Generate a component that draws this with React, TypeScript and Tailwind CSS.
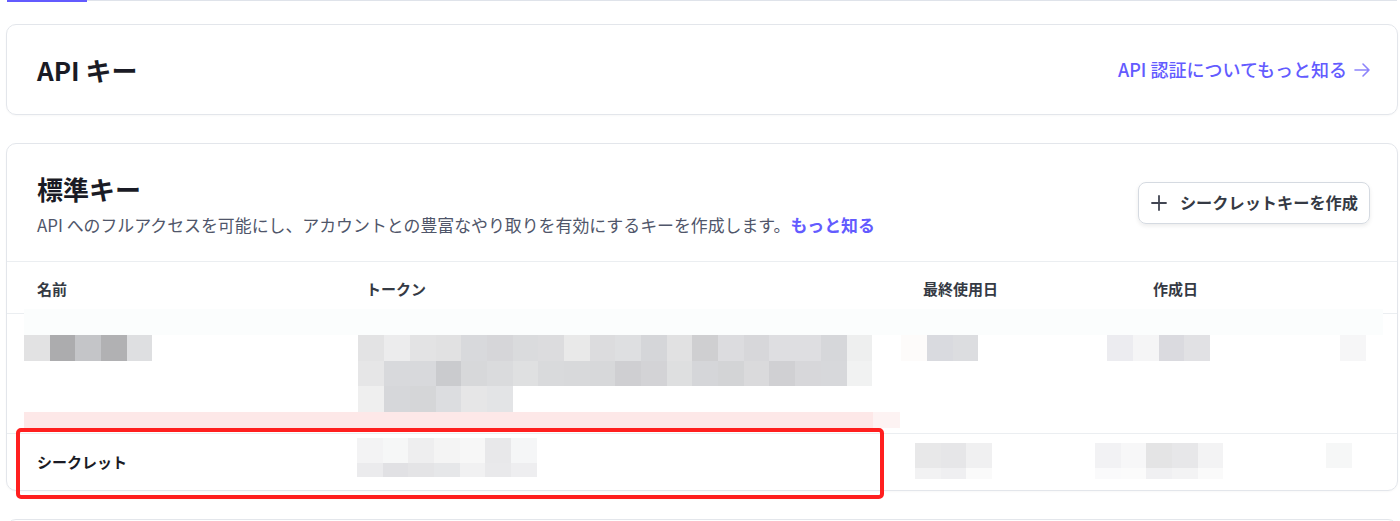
import React from "react";
import { Plus } from "lucide-react";

const tokenRows = [
  [
    "bg-[#e3e3e4]", "bg-[#ececed]", "bg-[#e3e3e4]", "bg-[#e1e1e2]", "bg-[#d8d9dc]",
    "bg-[#d6d6d9]", "bg-[#dadbdd]", "bg-[#dcdcde]", "bg-[#e9e9e9]", "bg-[#dcdcde]",
    "bg-[#dedfe1]", "bg-[#d5d6d9]", "bg-[#e1e1e2]", "bg-[#cfcfd1]", "bg-[#dcdcdf]",
    "bg-[#d7d7da]", "bg-[#dedee1]", "bg-[#dedee1]", "bg-[#d6d7da]", "bg-[#eeefef]",
  ],
  [
    "bg-[#e6e6e7]", "bg-[#d8d9dc]", "bg-[#d8d9dc]", "bg-[#cacbce]", "bg-[#d7d8da]",
    "bg-[#dadbdd]", "bg-[#dfe0e1]", "bg-[#d9dadc]", "bg-[#d8d9db]", "bg-[#d7d8da]",
    "bg-[#cfcfd2]", "bg-[#d3d3d6]", "bg-[#dedfe0]", "bg-[#d5d6d9]", "bg-[#d3d4d6]",
    "bg-[#dadadc]", "bg-[#d0d0d3]", "bg-[#d7d7da]", "bg-[#d7d8db]", "bg-[#f1f2f2]",
  ],
  ["bg-[#efefef]", "bg-[#d6d7da]", "bg-[#d5d6d8]", "bg-[#dcdde0]", "bg-[#e6e6e7]", "bg-[#e3e4e6]"],
];

// one strip of pixelated blocks
function Blocks({ cells, h = "h-[25.6px]" }: { cells: string[]; h?: string }) {
  return (
    <div className="flex">
      {cells.map((c, i) => (
        <div key={i} className={`w-[25.7px] shrink-0 ${h} ${c}`} />
      ))}
    </div>
  );
}

export default function App() {
  return (
    <div className="relative h-[521px] w-[1400px] overflow-hidden bg-white font-['Noto_Sans_CJK_JP','Noto_Sans',sans-serif] text-[#353a44]">
      {/* tab underline */}
      <div className="flex h-[2px] items-start">
        <div className="ml-[7px] h-[2px] w-[80px] bg-[#635bff]" />
        <div className="h-px w-[1310px] bg-[#dfe3ea]" />
      </div>

      <div className="ml-[6px] w-[1392px] pt-[22px]">
        {/* API keys header card */}
        <div className="flex h-[91px] items-center justify-between rounded-[10px] border border-[#e3e6eb] pl-[30px] pr-[26px] shadow-[0_1px_2px_rgba(0,0,0,0.03)]">
          <h1 className="text-[26px] font-bold leading-[36px] text-[#1a1b25]">API キー</h1>
          <a className="flex items-center gap-[6px] text-[18px] font-medium text-[#635bff]">
            API 認証についてもっと知る
            <svg width="18" height="18" viewBox="0 0 18 18" fill="none" stroke="#8d84fb" strokeWidth="1.6" strokeLinecap="round" strokeLinejoin="round">
              <path d="M2 9h14M10 3l6 6-6 6" />
            </svg>
          </a>
        </div>

        {/* standard keys card */}
        <div className="mt-[28px] rounded-[10px] border border-[#e3e6eb] shadow-[0_1px_2px_rgba(0,0,0,0.03)]">
          <div className="flex h-[118px] justify-between border-b border-[#ebeef1] pl-[30px] pr-[27px]">
            <div className="pt-[27px]">
              <h2 className="text-[26px] font-bold leading-[36px] text-[#1a1b25]">標準キー</h2>
              <p className="mt-[6px] text-[16.9px] leading-[24px] text-[#50566a]">
                API へのフルアクセスを可能にし、アカウントとの豊富なやり取りを有効にするキーを作成します。
                <a className="font-semibold text-[#635bff]">もっと知る</a>
              </p>
            </div>
            <button className="flex h-[42px] items-center gap-[9px] self-center rounded-[8px] border border-[#d5dae1] pl-[8px] pr-[11px] text-[16.2px] font-semibold text-[#353a44] shadow-[0_2px_4px_rgba(0,0,0,0.08)]">
              <Plus size={24} strokeWidth={1.8} className="text-[#414552]" />
              シークレットキーを作成
            </button>
          </div>

          {/* table header */}
          <div className="flex h-[52px] items-center border-b border-[#ebeef1] pl-[30px] pt-[4px] text-[15px] font-bold text-[#353a44]">
            <div className="w-[329px]">名前</div>
            <div className="w-[557px]">トークン</div>
            <div className="w-[230px]">最終使用日</div>
            <div>作成日</div>
          </div>

          {/* first key row (redacted) */}
          <div className="border-b border-[#ebeef1] pb-[5px]">
            <div className="-mt-[5px] ml-[17px] h-[26px] w-[1359px] bg-[#fbfdfd]" />
            <div className="flex h-[77px] items-start">
              <div className="ml-[17px]">
                <Blocks cells={["bg-[#e2e2e3]", "bg-[#acacae]", "bg-[#c4c5c8]", "bg-[#b1b1b3]", "bg-[#dedfe1]"]} />
              </div>
              <div className="ml-[206px]">
                {tokenRows.map((r, i) => (
                  <Blocks key={i} cells={r} />
                ))}
              </div>
              <div className="ml-[29px]">
                <Blocks cells={["bg-[#fdfbfa]", "bg-[#d9dadf]", "bg-[#dcdde0]"]} />
              </div>
              <div className="ml-[129px]">
                <Blocks cells={["bg-[#ececf0]", "bg-[#f5f5f6]", "bg-[#dadadf]", "bg-[#e1e1e4]"]} />
              </div>
              <div className="ml-[130px]">
                <Blocks cells={["bg-[#f6f6f7]"]} />
              </div>
            </div>
            <div className="ml-[17px] flex h-[16px]">
              <div className="w-[849px] bg-[#fde8e8]" />
              <div className="w-[27px] bg-[#fdf3f3]" />
            </div>
          </div>

          {/* secret row */}
          <div className="flex h-[56px] items-start">
            <div className="w-[350px] self-center pl-[30px] text-[15px] font-bold text-[#1a1b25]">シークレット</div>
            <div className="mt-[4px]">
              <Blocks cells={["bg-[#f3f3f4]", "bg-[#f6f7f7]", "bg-[#eeeeef]", "bg-[#f4f4f4]", "bg-[#f7f7f7]", "bg-[#e8e8ea]", "bg-[#f5f6f7]"]} h="h-[25px]" />
              <Blocks cells={["bg-[#ebebed]", "bg-[#e1e1e4]", "bg-[#e4e4e6]", "bg-[#e6e7e9]", "bg-[#f1f1f2]", "bg-[#e9e9eb]", "bg-[#eeeef0]"]} h="h-[14px]" />
            </div>
            <div className="ml-[378px] mt-[9px]">
              <Blocks cells={["bg-[#e8e8e9]", "bg-[#e6e6e8]", "bg-[#f0f0f1]"]} h="h-[25px]" />
              <Blocks cells={["bg-[#f2f2f3]", "bg-[#efeff1]", "bg-[#fafafa]"]} h="h-[11px]" />
            </div>
            <div className="ml-[103px] mt-[9px]">
              <Blocks cells={["bg-[#f2f2f4]", "bg-[#f7f7f8]", "bg-[#e4e4e5]", "bg-[#e7e7e9]", "bg-[#f3f3f4]"]} h="h-[25px]" />
              <Blocks cells={["bg-[#fafafb]", "bg-[#fbfbfb]", "bg-[#f0f0f2]", "bg-[#f3f3f4]", "bg-[#fafafa]"]} h="h-[11px]" />
            </div>
            <div className="ml-[103px] mt-[9px]">
              <Blocks cells={["bg-[#f6f7f7]"]} h="h-[25px]" />
            </div>
          </div>
        </div>

        {/* next card, cut off */}
        <div className="mt-[28px] h-[40px] rounded-[10px] border border-[#e3e6eb]" />
      </div>

      {/* annotation box */}
      <div className="absolute left-[16px] top-[428px] h-[71px] w-[868px] rounded-[5px] border-[4px] border-[#ff1f1f]" />
    </div>
  );
}
